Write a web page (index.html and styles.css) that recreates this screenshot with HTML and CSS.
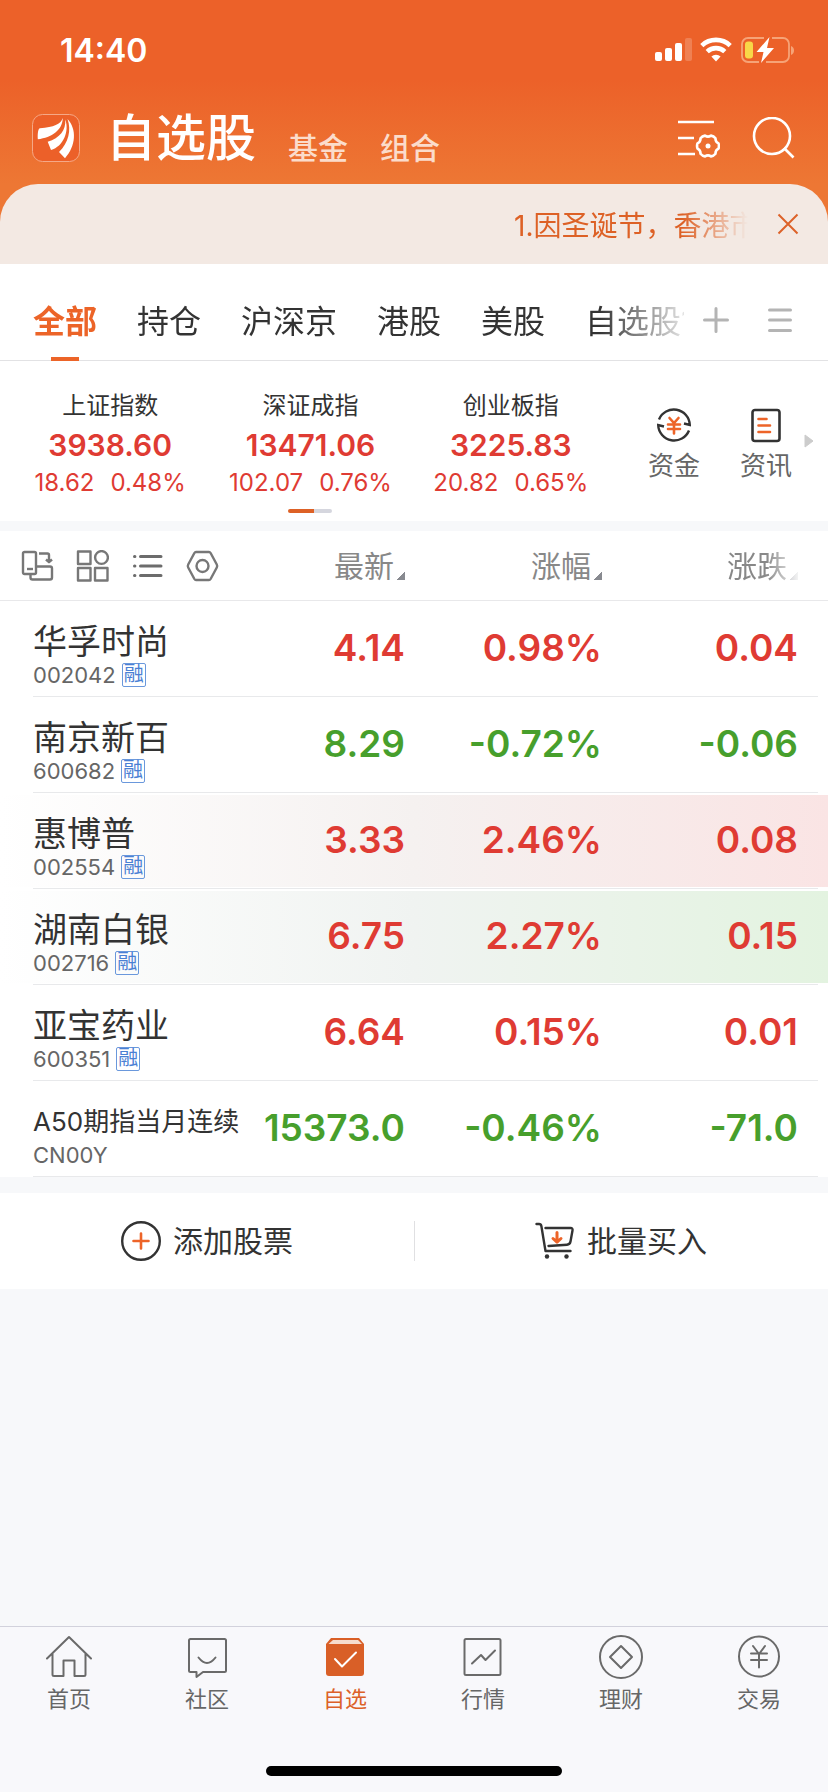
FILE: index.html
```html
<!DOCTYPE html>
<html lang="zh-CN">
<head>
<meta charset="utf-8">
<meta name="viewport" content="width=device-width, initial-scale=1">
<title>自选股</title>
<link rel="stylesheet" href="styles.css">
</head>
<body>
<header class="top">
  <div class="status">
    <span class="clock">14:40</span>
    <div class="status-icons">
      <svg width="38" height="26" viewBox="0 0 38 26" fill="#fff"><rect x="1" y="15" width="7" height="9" rx="2"/><rect x="11" y="11" width="7" height="13" rx="2"/><rect x="21" y="6" width="7" height="18" rx="2"/><rect x="31" y="1" width="7" height="23" rx="2" opacity=".2"/></svg>
      <svg width="32" height="26" viewBox="0 0 32 26" fill="none" stroke="#fff" stroke-width="4.6"><path d="M1.8 8.6a20.5 20.5 0 0 1 28.4 0"/><path d="M7.2 14.6a12.8 12.8 0 0 1 17.6 0"/><path d="M11.4 19.6a6.8 6.8 0 0 1 9.2 0L16 24.4z" fill="#fff" stroke="none"/></svg>
      <svg width="54" height="26" viewBox="0 0 54 26"><path d="M24 1H8a6 6 0 0 0-6 6v12a6 6 0 0 0 6 6h11M32 1h11a6 6 0 0 1 6 6v12a6 6 0 0 1-6 6H26" fill="none" stroke="#f6a377" stroke-width="1.8"/><path d="M51 9v9q3-1.200 3-4.500t-3-4.500z" fill="#f6a377"/><rect x="5" y="4.500" width="8" height="17" rx="3" fill="#f8d748"/><path d="M29.500 0 16.500 15h7L21 26l13-15h-7z" fill="#fff"/></svg>
    </div>
  </div>
  <div class="titlebar">
    <svg class="logo" width="48" height="48" viewBox="0 0 48 48"><rect x=".5" y=".5" width="47" height="47" rx="10" fill="#ec6029" stroke="#f5a887"/><g fill="#fff"><path d="M30.800 4C28.500 10.500 22 13 8 14.200 6 14.500 5.500 20 5.800 25.300 20 23.500 30.500 16 30.800 4z"/><path d="M33.300 5.500C34 16 28 24 15.700 27.800L19 36C31.500 32.500 37.500 17 33.300 5.500z"/><path d="M35.500 5c4 11 1 24-8.500 33l6 6.200C44 32 45 15 35.500 5z"/></g></svg>
    <nav class="titles">
      <h1>自选股</h1>
      <a href="#fund">基金</a>
      <a href="#group">组合</a>
    </nav>
    <div class="tools">
      <button aria-label="列表设置"><svg width="44" height="42" viewBox="0 0 44 42" fill="none" stroke="#fff" stroke-width="2.600"><path d="M2 5h36M2 21h16M2 37h17"/><g transform="translate(32 29)"><path stroke-linejoin="round" d="M10.500-2.600Q11.400 0 10.500 2.600 7.200 4.100 7.500 7.800 5.700 10 3 10.400 0 8.300-3 10.400-5.700 10-7.500 7.800-7.200 4.100-10.500 2.600-11.400 0-10.500-2.600-7.200-4.100-7.500-7.800-5.700-10-3-10.400 0-8.300 3-10.400 5.700-10 7.500-7.800 7.200-4.100 10.500-2.600z"/><circle r="2.500" fill="#fff" stroke="none"/></g></svg></button>
      <button aria-label="搜索"><svg width="44" height="42" viewBox="0 0 44 42" fill="none" stroke="#fff" stroke-width="2.600"><circle cx="20" cy="19" r="18"/><path d="m32 31 9.500 9.500"/></svg></button>
    </div>
  </div>
  <div class="notice">
    <p>1.因圣诞节，香港市</p>
    <button aria-label="关闭"><svg width="22" height="22" viewBox="0 0 22 22" stroke="#dc6229" stroke-width="2"><path d="m1.500 1.500 19 19M20.500 1.500l-19 19"/></svg></button>
  </div>
</header>

<main class="main">
  <div class="tabs">
    <nav class="tab-list">
      <a class="active" href="#all">全部</a><a href="#hold">持仓</a><a href="#hs">沪深京</a><a href="#hk">港股</a><a href="#us">美股</a><a href="#mine">自选股1</a>
    </nav>
    <button aria-label="新增分组"><svg width="26" height="26" viewBox="0 0 26 26" stroke="#b4b4b4" stroke-width="3" stroke-linecap="round"><path d="M13 1.500v23M1.500 13h23"/></svg></button>
    <button aria-label="管理分组"><svg width="26" height="26" viewBox="0 0 26 26" stroke="#b4b4b4" stroke-width="3" stroke-linecap="round"><path d="M2.500 3h21M2.500 13h21M2.500 23.500h21"/></svg></button>
  </div>

  <section class="indices">
    <div class="index-list">
      <div class="index"><span class="index-name">上证指数</span><strong>3938.60</strong><span class="change"><span>18.62</span><span>0.48%</span></span></div>
      <div class="index"><span class="index-name">深证成指</span><strong>13471.06</strong><span class="change"><span>102.07</span><span>0.76%</span></span></div>
      <div class="index"><span class="index-name">创业板指</span><strong>3225.83</strong><span class="change"><span>20.82</span><span>0.65%</span></span></div>
      <div class="pager"></div>
    </div>
    <div class="links">
      <a href="#money"><svg width="38" height="38" viewBox="0 0 38 38" fill="none" stroke="#333" stroke-width="2.400"><path d="M4 13.500A16 16 0 0 1 34.800 19l-5.800-1.500M34 24.500A16 16 0 0 1 3.200 19l5.800 1.500"/><path d="m14.500 12 4.500 5 4.500-5M13 18.500h12M13 23h12M19 17v10.500" stroke="#ed6428" stroke-width="2.600" stroke-linecap="round"/></svg><span>资金</span></a>
      <a href="#news"><svg width="38" height="38" viewBox="0 0 38 38" fill="none" stroke="#333" stroke-width="2.600"><rect x="5.500" y="4" width="27" height="31" rx="2.500"/><path d="M11.500 13h8M11.500 19.500h11.500M11.500 26h11.500" stroke="#ed6428" stroke-linecap="round"/></svg><span>资讯</span></a>
    </div>
    <svg class="more" width="10" height="14" viewBox="0 0 10 14"><path d="M1 1v12l8-6z" fill="#ccc" stroke="#ccc"/></svg>
  </section>

  <table class="stocks">
    <colgroup><col><col class="col-last"><col class="col-pct"><col class="col-diff"></colgroup>
    <thead>
      <tr>
        <th><div class="view-tools">
          <button aria-label="横屏"><svg width="33" height="32" viewBox="0 0 33 32" fill="none" stroke="#777" stroke-width="2.400" stroke-linejoin="round"><rect x="2" y="2" width="13" height="22" rx="1.500"/><path d="M6 19h6"/><path d="M9.500 25v2.500q0 2 2 2H29q2 0 2-2V18.500q0-2-2-2H15M18 3.500h8.500q1.500 0 1.500 1.500v7M25 9.500l3 2.700 3-2.700"/></svg></button>
          <button aria-label="宫格"><svg width="33" height="32" viewBox="0 0 33 32" fill="none" stroke="#777" stroke-width="2.400" stroke-linejoin="round"><rect x="2" y="1.500" width="12.500" height="12.500"/><circle cx="25.500" cy="7.500" r="6.400"/><rect x="2" y="18" width="12.500" height="12.500"/><rect x="19" y="18" width="12.500" height="12.500"/></svg></button>
          <button aria-label="列表"><svg width="33" height="32" viewBox="0 0 33 32" fill="none" stroke="#6c6c6c" stroke-width="3" stroke-linecap="round"><path d="M9.500 6.500H30M9.500 16H30M9.500 25.500H30M3.500 6.500h.4M3.500 16h.4M3.500 25.500h.4"/></svg></button>
          <button aria-label="设置"><svg width="33" height="32" viewBox="0 0 33 32" fill="none" stroke="#777" stroke-width="2.400" stroke-linejoin="round"><path d="M10 2h13q1 0 1.600 1l6.200 11.500q.8 1.500 0 3L24.600 29q-.6 1-1.600 1H10q-1 0-1.600-1L2.200 17.500q-.8-1.500 0-3L8.400 3Q9 2 10 2z"/><circle cx="16.500" cy="16" r="6"/></svg></button>
        </div></th>
        <th><button class="sort">最新</button></th>
        <th><button class="sort">涨幅</button></th>
        <th><button class="sort fade">涨跌</button></th>
      </tr>
    </thead>
    <tbody>
      <tr class="up"><td><span class="name">华孚时尚</span><span class="code">002042<i>融</i></span></td><td>4.14</td><td>0.98%</td><td>0.04</td></tr>
      <tr class="down"><td><span class="name">南京新百</span><span class="code">600682<i>融</i></span></td><td>8.29</td><td>-0.72%</td><td>-0.06</td></tr>
      <tr class="up flash-red"><td><span class="name">惠博普</span><span class="code">002554<i>融</i></span></td><td>3.33</td><td>2.46%</td><td>0.08</td></tr>
      <tr class="up flash-green"><td><span class="name">湖南白银</span><span class="code">002716<i>融</i></span></td><td>6.75</td><td>2.27%</td><td>0.15</td></tr>
      <tr class="up"><td><span class="name">亚宝药业</span><span class="code">600351<i>融</i></span></td><td>6.64</td><td>0.15%</td><td>0.01</td></tr>
      <tr class="down"><td><span class="name long">A50期指当月连续</span><span class="code">CN00Y</span></td><td>15373.0</td><td>-0.46%</td><td>-71.0</td></tr>
    </tbody>
  </table>

  <div class="actions">
    <button><svg width="40" height="40" viewBox="0 0 40 40" fill="none"><circle cx="20" cy="20" r="18.800" stroke="#333" stroke-width="2.400"/><path d="M20 12.500v15M12.500 20h15" stroke="#ed6428" stroke-width="2.600" stroke-linecap="round"/></svg>添加股票</button>
    <button><svg width="40" height="40" viewBox="0 0 40 40" fill="none" stroke="#333" stroke-width="2.400" stroke-linecap="round" stroke-linejoin="round"><path d="M1.500 3H4q2 0 2.400 2.200L10.500 30h25M10.500 7h25q2.500 0 2 2.500l-2 11q-.5 3-3.500 3.200L13.500 25"/><circle cx="12" cy="35.500" r="2.200" fill="#333" stroke="none"/><circle cx="31.500" cy="35.500" r="2.200" fill="#333" stroke="none"/><path d="M22 11.500v9M18 17.500l4 3.700 4-3.700" stroke="#ed6428" stroke-width="3"/></svg>批量买入</button>
  </div>
</main>

<footer class="bottom">
  <nav class="nav">
    <a href="#home"><svg width="46" height="46" viewBox="0 0 46 46"><path d="m1 23.500 22-21.500 22 21.500M6.500 19v20.500q0 1.500 1.500 1.500h9.500V25.500h11V41H38q1.500 0 1.500-1.500V19"/></svg>首页</a>
    <a href="#community"><svg width="46" height="46" viewBox="0 0 46 46"><path d="M6.500 4h34q1.500 0 1.500 1.500v30q0 1.500-1.500 1.500H19l-6.500 5v-5h-6Q5 37 5 35.500v-30Q5 4 6.500 4zM14.500 22.500q8.500 11 17 0"/></svg>社区</a>
    <a class="active" href="#watch"><svg width="46" height="46" viewBox="0 0 46 46"><path d="M9 3h28l5 6v29q0 3-3 3H7q-3 0-3-3V9z" fill="#d95f27" stroke="none"/><path d="M11 5h25l4 4H6.500z" fill="#f6dccd" stroke="none"/><path d="m13 24 7 7.500L34 17.500" stroke="#fff"/></svg>自选</a>
    <a href="#market"><svg width="46" height="46" viewBox="0 0 46 46"><rect x="4.500" y="4" width="36" height="36" rx="1.500"/><path d="m12 28.500 9-8.500 4.500 5L35 15.500"/></svg>行情</a>
    <a href="#wealth"><svg width="46" height="46" viewBox="0 0 46 46"><circle cx="23" cy="22" r="21"/><path d="m23 11 11 11-11 11-11-11z"/></svg>理财</a>
    <a href="#trade"><svg width="46" height="46" viewBox="0 0 46 46"><circle cx="23" cy="21.500" r="20"/><path d="m17 11 6 8 6-8M15 18.500h16M15 25h16M23 18.500v14"/></svg>交易</a>
  </nav>
  <div class="home-indicator"></div>
</footer>
</body>
</html>
```
FILE: styles.css
```css
* { box-sizing: border-box; }

body {
  margin: 0;
  min-height: 100vh;
  display: flex;
  flex-direction: column;
  background: #f7f8fa;
  color: #333;
  font-family: Inter, "Noto Sans CJK SC", sans-serif;
}

a { color: inherit; text-decoration: none; }
button { padding: 0; border: 0; background: none; color: inherit; font: inherit; }
svg { display: block; flex: none; }

/* Header */
.top { background: linear-gradient(#ec6129 80px, #ed7734 184px); }

.status {
  height: 100px;
  padding: 0 34px 0 60px;
  display: flex;
  align-items: center;
  justify-content: space-between;
  color: #fff;
}
.clock { font-size: 32px; font-weight: 600; }
.status-icons { display: flex; align-items: center; gap: 8px; }

.titlebar {
  height: 84px;
  padding: 0 32px 8px 32px;
  display: flex;
  align-items: center;
  gap: 26px;
  color: #fff;
}
.titles { display: flex; align-items: flex-end; gap: 32px; }
.titles h1 { margin: 0; font-size: 50px; font-weight: 500; line-height: 60px; }
.titles a { font-size: 30px; font-weight: 500; line-height: 40px; color: #fbdccb; }
.tools { display: flex; gap: 32px; margin-left: auto; }

.notice {
  height: 80px;
  padding: 0 29px;
  display: flex;
  align-items: center;
  justify-content: flex-end;
  gap: 29px;
  border-radius: 38px 38px 0 0;
  background: #f3e9e3;
  color: #dd6126;
  font-size: 28px;
}
.notice p {
  width: 234px;
  margin: 0;
  overflow: hidden;
  white-space: nowrap;
  mask-image: linear-gradient(90deg, #000 72%, transparent);
}

/* Group tabs */
.main { flex: 1; }
.tabs {
  height: 97px;
  padding: 0 35px 0 33px;
  display: flex;
  align-items: center;
  gap: 38px;
  background: #fff;
  border-bottom: 1px solid #e2e2e4;
}
.tab-list {
  flex: 1;
  display: flex;
  gap: 40px;
  height: 97px;
  margin-right: -19px;
  overflow: hidden;
  white-space: nowrap;
  font-size: 32px;
  line-height: 116px;
  mask-image: linear-gradient(90deg, #000 87%, transparent 102%);
}
.tab-list .active {
  color: #ec6428;
  font-weight: 700;
  background: linear-gradient(#ec6428, #ec6428) center 93px / 28px 4px no-repeat;
}
.tabs button { padding-top: 16px; }

/* Market indices */
.indices {
  height: 160px;
  padding: 0 14px 0 10px;
  display: flex;
  background: #fff;
}
.index-list {
  flex: 1;
  display: grid;
  grid-template-columns: repeat(3, 1fr);
  align-content: start;
  padding-top: 28px;
}
.index { display: flex; flex-direction: column; align-items: center; color: #df3b33; }
.index-name { color: #333; font-size: 24px; line-height: 34px; }
.index strong { font-size: 30px; font-weight: 600; line-height: 44px; }
.change { display: flex; gap: 16px; font-size: 24px; line-height: 32px; }
.pager {
  grid-column: 2;
  width: 44px;
  height: 4px;
  margin: 10px auto 0;
  border-radius: 2px;
  background: linear-gradient(90deg, #dd6126 60%, #d5d6de 60%);
}
.links { display: flex; gap: 40px; padding: 45px 12px 0 37px; color: #666; font-size: 26px; line-height: 40px; }
.links a { display: flex; flex-direction: column; align-items: center; gap: 2px; }
.more { align-self: center; }

/* Stock table */
.stocks {
  width: 100%;
  margin-top: 10px;
  border-spacing: 0;
  table-layout: fixed;
  background: #fff;
}
.col-last { width: 160px; }
.col-pct { width: 197px; }
.col-diff { width: 226px; }
.stocks th, .stocks td { padding: 0 0 3px; text-align: right; }
.stocks th { height: 70px; padding-bottom: 0; border-bottom: 1px solid #e8e8ea; }
.stocks th:last-child, .stocks td:last-child { padding-right: 30px; }
.view-tools { display: flex; gap: 22px; padding-left: 21px; }
.sort { color: #888; font-size: 30px; line-height: 40px; font-weight: 400; }
.sort::after {
  content: "";
  display: inline-block;
  width: 8px;
  height: 8px;
  margin-left: 3px;
  vertical-align: -3px;
  background: linear-gradient(135deg, transparent 50%, #888a90 50%);
}
.fade { mask-image: linear-gradient(90deg, #000 55%, transparent 105%); }

.stocks tbody tr {
  --mid: transparent;
  --end: transparent;
  height: 96px;
  background:
    linear-gradient(#e8e9eb, #e8e9eb) 33px 95px / calc(100% - 43px) 1px no-repeat,
    linear-gradient(90deg, #fff, var(--mid) 50%, var(--end)) 0 2px / 100% 92px no-repeat;
}
.stocks .flash-red { --mid: #f5f1f0; --end: #fae4e4; }
.stocks .flash-green { --mid: #f0f3f1; --end: #e3f3e0; }
.stocks td { font-size: 37px; font-weight: 600; white-space: nowrap; }
.stocks td:first-child { padding: 20px 0 0 33px; text-align: left; vertical-align: top; font-weight: 400; }
.up { color: #df3b33; }
.down { color: #479f2c; }
.name { display: block; color: #333; font-size: 34px; line-height: 42px; }
.long { font-size: 26px; }
.code { display: flex; align-items: center; gap: 6px; color: #666; font-size: 22px; line-height: 24px; font-weight: 400; }
.code i {
  width: 24px;
  height: 24px;
  border: 1px solid #6a98dc;
  border-radius: 2px;
  color: #4a80d4;
  font-size: 20px;
  font-style: normal;
  line-height: 21px;
  text-align: center;
}

/* Actions */
.actions {
  height: 96px;
  margin-top: 16px;
  display: grid;
  grid-template-columns: 1fr 1fr;
  background: linear-gradient(#e0e0e2, #e0e0e2) center / 1px 40px no-repeat #fff;
}
.actions button { display: flex; align-items: center; justify-content: center; gap: 12px; font-size: 30px; line-height: 40px; }

/* Bottom navigation */
.bottom { background: #f8f8fb; border-top: 1px solid #d2d2dc; }
.nav { display: grid; grid-template-columns: repeat(6, 1fr); padding-top: 8px; }
.nav a { display: flex; flex-direction: column; align-items: center; color: #666; font-size: 22px; line-height: 36px; }
.nav svg { fill: none; stroke: #6a6a6a; stroke-width: 2; stroke-linejoin: round; stroke-linecap: round; }
.nav .active { color: #dc6128; }
.home-indicator { width: 296px; height: 10px; margin: 49px auto 16px; border-radius: 5px; background: #000; }
```
